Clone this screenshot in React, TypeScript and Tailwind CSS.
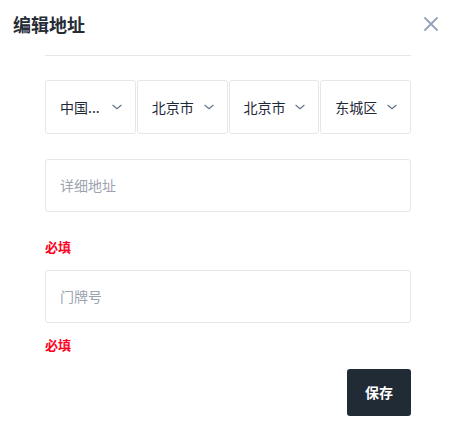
import React from 'react';

const regions = ['中国大陆', '北京市', '北京市', '东城区'];

const Chevron: React.FC = () => (
  <svg width="14" height="14" viewBox="0 0 24 24" fill="none" stroke="#64748b" strokeWidth="2" strokeLinecap="round" strokeLinejoin="round" className="shrink-0">
    <path d="M5 9l7 6 7-6" />
  </svg>
);

const App: React.FC = () => {
  return (
    <div className="w-[450px] h-[429px] bg-white text-[#1f2937]" style={{ fontFamily: '"Noto Sans CJK SC", "Noto Sans", sans-serif' }}>
      {/* header */}
      <div className="flex items-center justify-between pl-[13px] pr-[11px] pt-[11px] h-[37px]">
        <h2 className="text-[18px] font-bold leading-[28px] text-[#262c36]">编辑地址</h2>
        <button className="text-[#94a3b8]" aria-label="close">
          <svg width="16" height="16" viewBox="0 0 16 16" stroke="currentColor" strokeWidth="1.8" strokeLinecap="round">
            <path d="M2 2l12 12M14 2L2 14" />
          </svg>
        </button>
      </div>

      <div className="ml-[45px] w-[366px]">
        <div className="mt-[18px] border-t border-[#e5e7eb]" />

        {/* region selects */}
        <div className="mt-[24px] flex gap-px">
          {regions.map((r, i) => (
            <div key={i} className="flex-1 min-w-0 h-[54px] flex items-center justify-between pl-[14px] pr-[11px] border border-[#e5e7eb] rounded-[3px]">
              <span className={`text-[14px] ${i === 0 ? 'w-[42px] truncate' : ''}`}>{i === 0 ? '中国...' : r}</span>
              <Chevron />
            </div>
          ))}
        </div>

        {/* detail address */}
        <div className="mt-[25px] h-[53px] border border-[#e5e7eb] rounded-[3px] flex items-center px-[14px]">
          <input className="w-full outline-none text-[14px] placeholder:text-[#9ca3af]" placeholder="详细地址" />
        </div>
        <p className="mt-[25px] text-[13px] font-bold leading-[20px] text-[#ff0022]">必填</p>

        {/* door number */}
        <div className="mt-[13px] h-[53px] border border-[#e5e7eb] rounded-[3px] flex items-center px-[14px]">
          <input className="w-full outline-none text-[14px] placeholder:text-[#9ca3af]" placeholder="门牌号" />
        </div>
        <p className="mt-[12px] text-[13px] font-bold leading-[20px] text-[#ff0022]">必填</p>

        <div className="mt-[14px] flex justify-end">
          <button className="w-[64px] h-[47px] rounded-[3px] bg-[#212b36] text-white text-[14px] font-bold">保存</button>
        </div>
      </div>
    </div>
  );
};

export default App;
